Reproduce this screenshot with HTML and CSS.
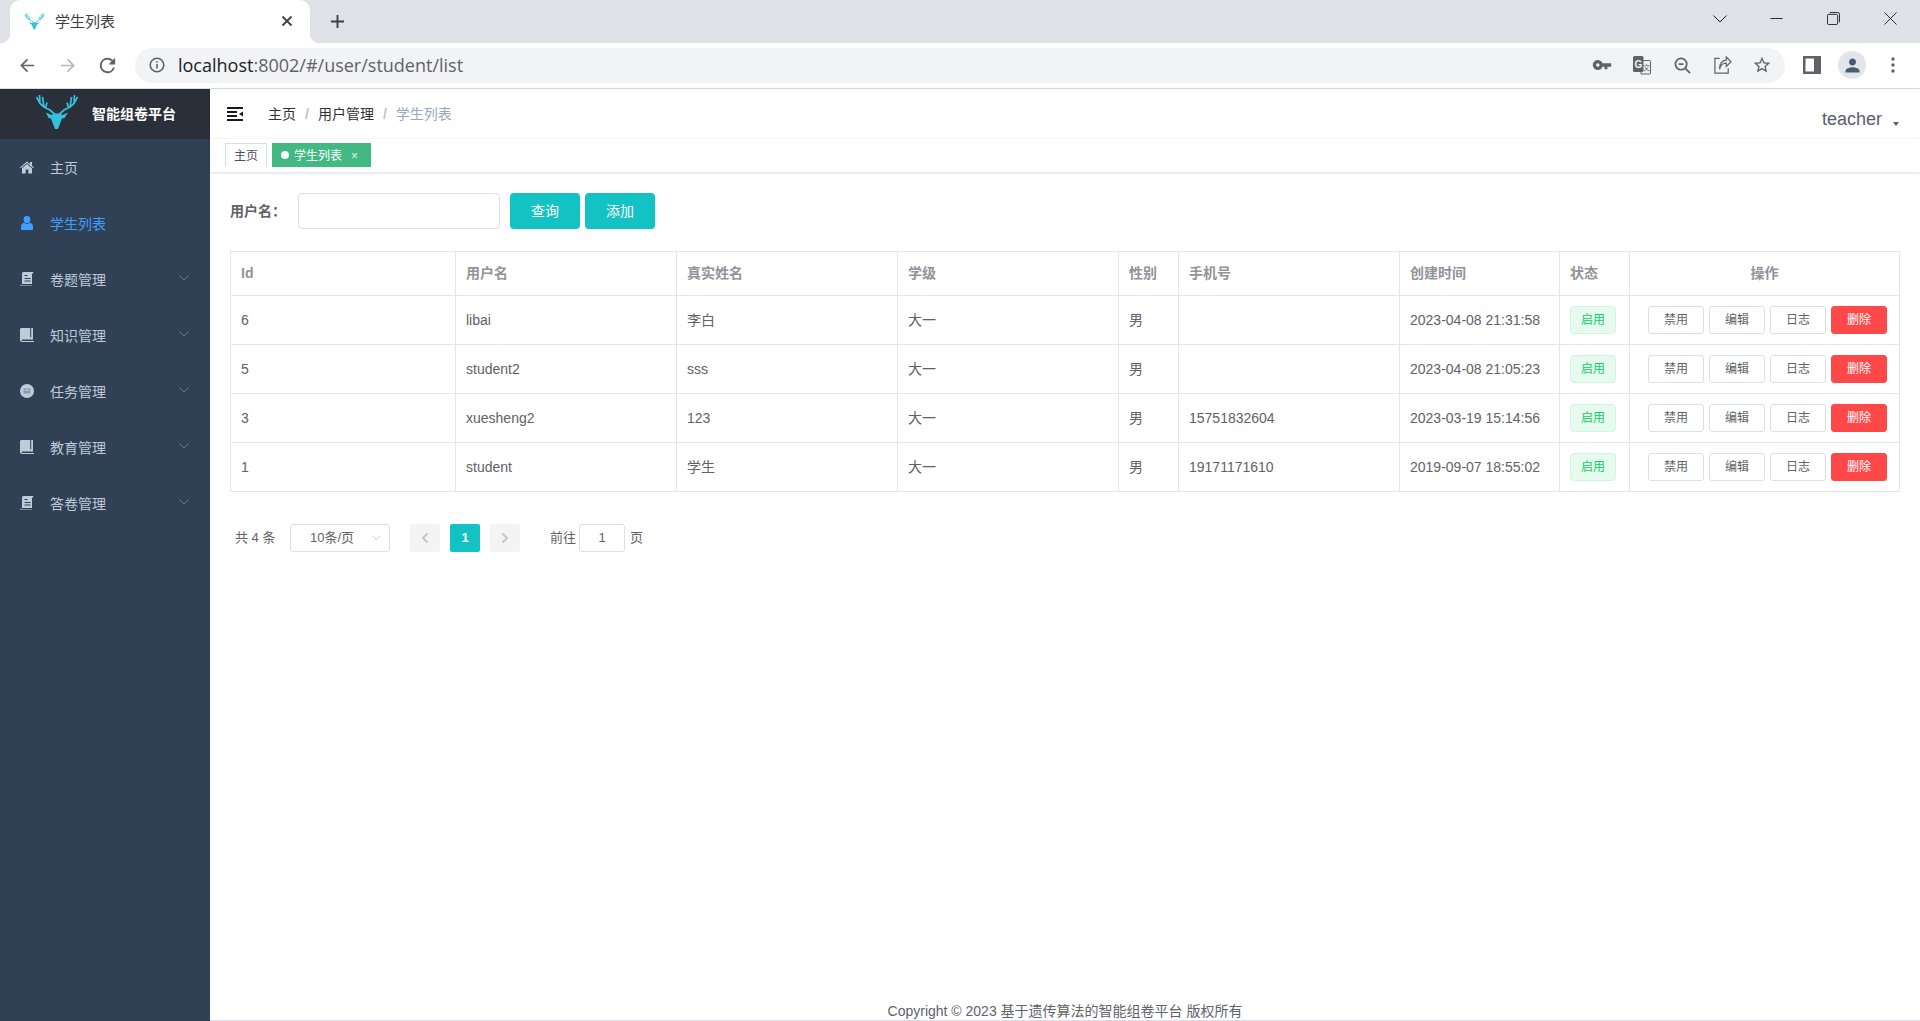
FILE: index.html
```html
<!DOCTYPE html>
<html lang="zh-CN">
<head>
<meta charset="utf-8">
<title>学生列表</title>
<link rel="stylesheet" href="styles.css">
</head>
<body>
<svg class="sprite" aria-hidden="true">
  <symbol id="deer" viewBox="0 0 44 36">
    <path class="deer-head" d="M11 19.500l5.500 2.500L19 20.500h6l2.500 1.500 5.500-2.500-3.500 5.500-2.500.5-4 10.500h-3l-4-10.500-2.500-.5z"/>
    <path class="deer-antler" d="M20 21.500L15 17l-6-3-4-3.500L1.500 4M5 10.500L4.500 2M9 14L7.500 4M10.500 15L12 9.500M24 21.500L29 17l6-3 4-3.500L42.500 4M39 10.500L39.500 2M35 14L36.500 4M33.500 15L32 9.500"/>
  </symbol>
  <symbol id="i-scroll" viewBox="0 0 14 14">
    <path d="M3 0h10.500l-.8 1.800H12V12H2.500L0 14h10.500L12 12.500V13.500H1.200L0 12.700h2V1z" fill="currentColor"/>
    <path d="M4.500 3.500h3M4.500 6.500h6M4.500 9h6" stroke="#304156" stroke-width="1" fill="none"/>
  </symbol>
  <symbol id="i-book" viewBox="0 0 14 14">
    <path d="M1 0h9.200v9l1 .6V0H13v11.500H2a1 1 0 0 0 0 1.500h12v1H1.500L0 12.800V1z" fill="currentColor"/>
  </symbol>
  <symbol id="i-chev" viewBox="0 0 10 6">
    <path d="M.5.500L5 5 9.500.500" fill="none" stroke="currentColor" stroke-width="1"/>
  </symbol>
</svg>

<header class="chrome">
  <div class="tabstrip">
    <div class="tab">
      <svg class="tab-favicon"><use href="#deer"/></svg>
      <span class="tab-title">学生列表</span>
      <svg class="tab-close" viewBox="0 0 12 12"><path d="M1.500 1.500l9 9M10.500 1.500l-9 9"/></svg>
    </div>
    <svg class="newtab" viewBox="0 0 16 16"><path d="M8 1v14M1 8h14"/></svg>
    <div class="winctl">
      <div class="winbtn"><svg viewBox="0 0 14 8" class="win-ic-s"><path d="M.5.500L7 7 13.500.500"/></svg></div>
      <div class="winbtn"><svg viewBox="0 0 14 14" class="win-ic"><path d="M.500 7h13"/></svg></div>
      <div class="winbtn"><svg viewBox="0 0 14 14" class="win-ic"><rect x=".5" y="2.500" width="11" height="11" rx="1.500"/><path d="M3 .5h8.500a2 2 0 0 1 2 2V11"/></svg></div>
      <div class="winbtn"><svg viewBox="0 0 14 14" class="win-ic"><path d="M.5.500l13 13M13.500.500l-13 13"/></svg></div>
    </div>
  </div>
  <div class="toolbar">
    <div class="navbtn"><svg viewBox="0 0 18 18" class="stroke-ic"><path d="M16 9H2.500M9 2.500L2.500 9 9 15.500"/></svg></div>
    <div class="navbtn dim"><svg viewBox="0 0 18 18" class="stroke-ic"><path d="M2 9h13.500M9 2.500L15.500 9 9 15.500"/></svg></div>
    <div class="navbtn"><svg viewBox="0 0 24 24" class="fill-ic big"><path d="M17.650 6.350A7.950 7.950 0 0 0 12 4a8 8 0 1 0 7.730 10h-2.080A6 6 0 1 1 12 6c1.660 0 3.140.690 4.220 1.780L13 11h7V4l-2.350 2.350z"/></svg></div>
    <div class="omnibox">
      <svg viewBox="0 0 16 16" class="info-ic"><circle cx="8" cy="8" r="6.800"/><path d="M8 7v4.500M8 4.200v1.600"/></svg>
      <span class="url"><span class="url-host">localhost</span>:8002/#/user/student/list</span>
      <div class="omni-actions">
        <div class="navbtn"><svg viewBox="0 0 24 24" class="fill-ic"><path d="M12.650 10C11.830 7.670 9.610 6 7 6c-3.310 0-6 2.690-6 6s2.690 6 6 6c2.610 0 4.830-1.670 5.650-4H15v3h3.500v-3H23v-4H12.650zM7 14c-1.100 0-2-.9-2-2s.9-2 2-2 2 .9 2 2-.9 2-2 2z"/></svg></div>
        <div class="navbtn"><svg viewBox="0 0 20 20" class="translate-ic"><path class="tr-back" d="M9 5.500h8.500a1 1 0 0 1 1 1V18a1 1 0 0 1-1 1H9z"/><rect class="tr-front" x="1" y="1" width="10.500" height="16" rx="1.500"/><text x="2.600" y="12.500" class="tr-g">G</text><text x="11" y="14.500" class="tr-z">文</text></svg></div>
        <div class="navbtn"><svg viewBox="0 0 18 18" class="stroke-ic"><circle cx="7.500" cy="7.500" r="6"/><path d="M12 12l5 5M5 7.500h5"/></svg></div>
        <div class="navbtn"><svg viewBox="0 0 20 20" class="stroke-ic thin"><path d="M7 2.500H2V18h14v-5M7 14c.5-4 3.500-6.500 7-6.500V11l5-5-5-5v3.300C9.500 4.500 6.500 8.500 7 14z"/></svg></div>
        <div class="navbtn"><svg viewBox="0 0 24 24" class="fill-ic"><path d="M22 9.240l-7.190-.62L12 2 9.190 8.630 2 9.240l5.460 4.730L5.820 21 12 17.270 18.180 21l-1.630-7.030L22 9.240zM12 15.400l-3.760 2.270 1-4.280-3.320-2.880 4.380-.38L12 6.100l1.710 4.040 4.380.38-3.320 2.880 1 4.280L12 15.400z"/></svg></div>
      </div>
    </div>
    <div class="navbtn panel-btn"><svg viewBox="0 0 18 18" class="panel-ic"><path d="M0 0h18v18H0zM2.500 2.500v13H11v-13z" fill-rule="evenodd"/></svg></div>
    <div class="avatar"><svg viewBox="0 0 24 24"><path d="M12 12c2.210 0 4-1.790 4-4s-1.790-4-4-4-4 1.790-4 4 1.790 4 4 4zm0 2c-2.670 0-8 1.340-8 4v2h16v-2c0-2.660-5.330-4-8-4z"/></svg></div>
    <div class="navbtn"><svg viewBox="0 0 4 16" class="dots-ic"><circle cx="2" cy="2" r="1.700"/><circle cx="2" cy="8" r="1.700"/><circle cx="2" cy="14" r="1.700"/></svg></div>
  </div>
</header>

<div class="app">
  <aside class="sidebar">
    <div class="logo">
      <svg class="logo-deer"><use href="#deer"/></svg>
      <span class="logo-text">智能组卷平台</span>
    </div>
    <nav class="menu">
      <a class="menu-item">
        <svg class="menu-ic" viewBox="0 0 14 14"><path d="M7 1.500L0 7.500l.7.800L7 3l6.300 5.300.7-.8-2-1.700V2h-2v2.100zM7 4L2 8.200V13.500h3.700V9.500h2.600v4H12V8.200z" fill="currentColor"/></svg>
        <span>主页</span>
      </a>
      <a class="menu-item active">
        <svg class="menu-ic" viewBox="0 0 14 14"><path d="M7 0a3.300 3.300 0 0 1 3.300 3.500A3.300 3.300 0 0 1 7 7a3.300 3.300 0 0 1-3.300-3.500A3.300 3.300 0 0 1 7 0zM4 6.800C5.800 8 8.200 8 10 6.800c2 .5 3 2 3 4V14H1v-3.200c0-2 1-3.500 3-4z" fill="currentColor"/></svg>
        <span>学生列表</span>
      </a>
      <a class="menu-item"><svg class="menu-ic"><use href="#i-scroll"/></svg><span>卷题管理</span><svg class="menu-arrow"><use href="#i-chev"/></svg></a>
      <a class="menu-item"><svg class="menu-ic"><use href="#i-book"/></svg><span>知识管理</span><svg class="menu-arrow"><use href="#i-chev"/></svg></a>
      <a class="menu-item">
        <svg class="menu-ic" viewBox="0 0 14 14"><circle cx="7" cy="7" r="7" fill="currentColor"/><path d="M3.500 4.500h7v5h-7z" fill="#8d99aa"/><path d="M5 6h1v1H5zM8 6h1v1H8zM6.500 5.500h1V7h-1z" fill="#d3dae3"/></svg>
        <span>任务管理</span><svg class="menu-arrow"><use href="#i-chev"/></svg>
      </a>
      <a class="menu-item"><svg class="menu-ic"><use href="#i-book"/></svg><span>教育管理</span><svg class="menu-arrow"><use href="#i-chev"/></svg></a>
      <a class="menu-item"><svg class="menu-ic"><use href="#i-scroll"/></svg><span>答卷管理</span><svg class="menu-arrow"><use href="#i-chev"/></svg></a>
    </nav>
  </aside>

  <div class="main">
    <div class="navbar">
      <svg class="hamburger" viewBox="0 0 16 14"><path d="M0 0h16v2H0zM0 4h10v2H0zM0 8h10v2H0zM0 12h16v2H0zM16 4.500v5L12 7z"/></svg>
      <ol class="breadcrumb">
        <li>主页</li><li class="sep">/</li><li>用户管理</li><li class="sep">/</li><li class="current">学生列表</li>
      </ol>
      <div class="user">teacher<i class="caret"></i></div>
    </div>
    <div class="tags">
      <span class="tag-link">主页</span>
      <span class="tag-link on"><i class="tag-dot"></i>学生列表<i class="tag-x">×</i></span>
    </div>

    <section class="content">
      <form class="filter">
        <label class="filter-label">用户名：</label>
        <span class="input"></span>
        <button type="button" class="btn primary">查询</button>
        <button type="button" class="btn primary second">添加</button>
      </form>

      <table class="grid">
        <colgroup>
          <col class="c-id"><col class="c-w"><col class="c-w"><col class="c-w"><col class="c-sex"><col class="c-w"><col class="c-time"><col class="c-state"><col class="c-op">
        </colgroup>
        <thead>
          <tr><th>Id</th><th>用户名</th><th>真实姓名</th><th>学级</th><th>性别</th><th>手机号</th><th>创建时间</th><th>状态</th><th class="center">操作</th></tr>
        </thead>
        <tbody>
          <tr><td>6</td><td>libai</td><td>李白</td><td>大一</td><td>男</td><td></td><td>2023-04-08 21:31:58</td><td><span class="state">启用</span></td><td><div class="ops"><span class="op">禁用</span><span class="op">编辑</span><span class="op">日志</span><span class="op danger">删除</span></div></td></tr>
          <tr><td>5</td><td>student2</td><td>sss</td><td>大一</td><td>男</td><td></td><td>2023-04-08 21:05:23</td><td><span class="state">启用</span></td><td><div class="ops"><span class="op">禁用</span><span class="op">编辑</span><span class="op">日志</span><span class="op danger">删除</span></div></td></tr>
          <tr><td>3</td><td>xuesheng2</td><td>123</td><td>大一</td><td>男</td><td>15751832604</td><td>2023-03-19 15:14:56</td><td><span class="state">启用</span></td><td><div class="ops"><span class="op">禁用</span><span class="op">编辑</span><span class="op">日志</span><span class="op danger">删除</span></div></td></tr>
          <tr><td>1</td><td>student</td><td>学生</td><td>大一</td><td>男</td><td>19171171610</td><td>2019-09-07 18:55:02</td><td><span class="state">启用</span></td><td><div class="ops"><span class="op">禁用</span><span class="op">编辑</span><span class="op">日志</span><span class="op danger">删除</span></div></td></tr>
        </tbody>
      </table>

      <div class="pager">
        <span class="total">共 4 条</span>
        <span class="size">10条/页<svg class="size-arrow"><use href="#i-chev"/></svg></span>
        <span class="page-btn arrow"><svg viewBox="0 0 8 12"><path d="M6.500 1.500L2 6l4.500 4.500"/></svg></span>
        <span class="page-btn current">1</span>
        <span class="page-btn arrow"><svg viewBox="0 0 8 12"><path d="M1.500 1.500L6 6l-4.500 4.500"/></svg></span>
        <span class="jump">前往</span>
        <span class="jump-input">1</span>
        <span class="jump-end">页</span>
      </div>
    </section>

    <footer class="footer">Copyright © 2023 基于遗传算法的智能组卷平台 版权所有</footer>
  </div>
</div>
</body>
</html>
```

FILE: styles.css
```css
* { box-sizing: border-box; }
html, body { margin: 0; height: 100%; }
body {
  display: flex;
  flex-direction: column;
  height: 1021px;
  overflow: hidden;
  background: #fff;
  color: #606266;
  font-family: "Liberation Sans", "Noto Sans CJK SC", sans-serif;
  font-size: 14px;
  line-height: 20px;
}
.sprite { display: none; }

/* browser chrome */
.chrome { flex: none; }
.tabstrip { display: flex; height: 43px; background: #dee1e6; padding-left: 10px; align-items: stretch; }
.tab {
  position: relative;
  display: flex;
  align-items: center;
  width: 300px;
  background: #fff;
  border-radius: 10px 10px 0 0;
  padding: 0 16px 0 14px;
}
.tab::before, .tab::after {
  content: "";
  position: absolute;
  bottom: 0;
  width: 10px;
  height: 10px;
}
.tab::before { left: -10px; background: radial-gradient(circle at 0 0, transparent 10px, #fff 10.5px); }
.tab::after { right: -10px; background: radial-gradient(circle at 100% 0, transparent 10px, #fff 10.5px); }
.tab-favicon { width: 21px; height: 18px; margin-top: -2px; }
.tab-title { margin-left: 10px; font-size: 15px; color: #3c4043; flex: 1; margin-top: 1px; }
.tab-close { width: 12px; height: 12px; fill: none; stroke: #3c4043; stroke-width: 1.800; margin: -1px 1px 0 0; }
.newtab { width: 15px; height: 15px; margin: 14px 0 0 20px; fill: none; stroke: #3c4043; stroke-width: 2; }
.winctl { display: flex; margin-left: auto; margin-right: 1px; }
.winbtn { width: 57px; display: flex; align-items: flex-start; justify-content: center; padding-top: 12px; }
.win-ic { width: 13px; height: 13px; fill: none; stroke: #1f1f1f; stroke-width: 1; }
.win-ic-s { width: 14px; height: 8px; margin-top: 3px; fill: none; stroke: #1f1f1f; stroke-width: 1; }

.toolbar {
  display: flex;
  align-items: center;
  height: 46px;
  padding: 0 7px 1px;
  background: #fff;
  border-bottom: 1px solid #dadce0;
}
.navbtn { flex: none; width: 40px; height: 35px; display: flex; align-items: center; justify-content: center; }
.navbtn.dim { opacity: .45; }
.stroke-ic { width: 17px; height: 17px; fill: none; stroke: #5f6368; stroke-width: 1.800; }
.stroke-ic.thin { width: 19px; height: 19px; stroke-width: 1.300; }
.fill-ic { width: 20px; height: 20px; fill: #5f6368; }
.fill-ic.big { width: 23px; height: 23px; }
.omnibox {
  display: flex;
  align-items: center;
  flex: none;
  width: 1650px;
  height: 35px;
  margin-left: 8px;
  padding: 0 3px 0 14px;
  background: #f1f3f4;
  border-radius: 18px;
}
.info-ic { width: 16px; height: 16px; fill: none; stroke: #5f6368; stroke-width: 1.600; }
.url { margin-left: 13px; font-family: "Open Sans", sans-serif; font-size: 18px; color: #5f6368; }
.url-host { color: #202124; }
.omni-actions { display: flex; margin-left: auto; }
.translate-ic { width: 20px; height: 20px; }
.tr-back { fill: #f1f3f4; stroke: #5f6368; stroke-width: 1; }
.tr-front { fill: #5f6368; }
.tr-g { font-size: 10px; font-weight: 700; fill: #f1f3f4; font-family: "Liberation Sans", sans-serif; }
.tr-z { font-size: 7px; fill: #5f6368; font-family: "Noto Sans CJK SC", sans-serif; }
.panel-btn { margin-left: 7px; }
.panel-ic { width: 18px; height: 18px; fill: #5f6368; }
.avatar { flex: none; width: 28px; height: 28px; margin: 0 7px 0 6px; border-radius: 50%; background: #e2e5ea; display: flex; align-items: center; justify-content: center; }
.avatar svg { width: 21px; height: 21px; fill: #4a5a75; }
.dots-ic { width: 4px; height: 16px; fill: #5f6368; }

/* app shell */
.app { flex: 1; display: flex; min-height: 0; }
.sidebar { flex: none; width: 210px; background: #304156; }
.logo { display: flex; align-items: center; height: 50px; background: #2b2f3a; padding-left: 35px; }
.logo-deer { width: 44px; height: 36px; margin-top: -6px; flex: none; }
.logo-text { margin-left: 13px; font-size: 14px; font-weight: 700; color: #fff; white-space: nowrap; }
.deer-head { fill: #35c1de; }
.deer-antler { fill: none; stroke: #35c1de; stroke-width: 1.700; }
.menu { padding-top: 1px; }
.menu-item { position: relative; display: flex; align-items: center; height: 56px; padding-left: 20px; color: #bfcbd9; font-size: 14px; }
.menu-item.active { color: #409eff; }
.menu-ic { width: 14px; height: 14px; margin-right: 16px; flex: none; margin-top: -2px; }
.menu-arrow { width: 10px; height: 6px; margin-left: auto; margin-right: 21px; margin-top: -5px; color: #6c7a8d; }

.main { flex: 1; min-width: 0; display: flex; flex-direction: column; }
.navbar { flex: none; display: flex; align-items: center; height: 50px; padding-left: 17px; background: #fff; box-shadow: 0 1px 4px rgba(0, 21, 41, .08); position: relative; }
.hamburger { width: 16px; height: 14px; fill: #1a1a1a; margin-top: -1px; }
.breadcrumb { display: flex; list-style: none; margin: 0 0 0 25px; padding: 0; color: #303133; font-size: 14px; }
.breadcrumb .sep { margin: 0 9px; color: #c0c4cc; font-weight: 700; }
.breadcrumb .current { color: #97a8be; }
.user { margin-left: auto; margin-right: 21px; font-size: 18px; color: #5a5e66; display: flex; align-items: center; margin-top: 10px; }
.caret { width: 0; height: 0; margin: 9px 0 0 11px; border: 3.500px solid transparent; border-top: 4px solid #5a5e66; border-bottom: 0; }

.tags { flex: none; display: flex; align-items: flex-start; height: 33px; padding: 4px 0 0 15px; background: #fff; box-shadow: 0 1px 3px 0 rgba(0, 0, 0, .12), 0 0 3px 0 rgba(0, 0, 0, .04); position: relative; }
.tag-link { display: flex; align-items: center; height: 24px; padding: 2px 8px 0; margin-right: 5px; font-size: 12px; color: #495060; border: 1px solid #d8dce5; border-bottom-color: #fff; background: #fff; }
.tag-link.on { background: #42b983; color: #fff; border-color: #42b983; padding: 2px 12px 0 8px; }
.tag-dot { width: 8px; height: 8px; border-radius: 50%; background: #fff; margin: -2px 5px 0 0; }
.tag-x { font-style: normal; margin-left: 9px; font-size: 12px; opacity: .85; }

.content { padding: 21px 20px 0; }
.filter { display: flex; align-items: center; height: 36px; }
.filter-label { width: 68px; font-size: 14px; font-weight: 700; color: #606266; white-space: nowrap; }
.input { width: 202px; height: 36px; border: 1px solid #dcdfe6; border-radius: 4px; background: #fff; }
.btn { width: 70px; height: 36px; border: 0; border-radius: 4px; margin-left: 10px; font: inherit; font-size: 14px; color: #fff; }
.btn.primary { background: #13c2c2; }
.btn.second { margin-left: 5px; }

.grid { width: 1669px; margin-top: 22px; table-layout: fixed; border-collapse: collapse; border: 1px solid #e3e6ee; color: #606266; }
.c-id { width: 225px; }
.c-w { width: 221px; }
.c-sex { width: 60px; }
.c-time { width: 160px; }
.c-state { width: 70px; }
.c-op { width: 270px; }
.grid th, .grid td { padding: 0 0 0 10px; border: 1px solid #e3e6ee; text-align: left; white-space: nowrap; overflow: hidden; }
.grid th { height: 44px; padding-bottom: 2px; color: #909399; font-weight: 700; }
.grid th.center { text-align: center; padding: 0 0 2px; }
.grid td { height: 49px; }
.state { display: inline-flex; align-items: center; justify-content: center; width: 46px; height: 28px; vertical-align: middle; font-size: 12px; color: #13ce66; background: #e7faf0; border: 1px solid #d0f5e0; border-radius: 4px; }
.ops { display: flex; gap: 5px; padding-left: 8px; }
.op { display: flex; align-items: center; justify-content: center; width: 56px; height: 28px; font-size: 12px; color: #606266; background: #fff; border: 1px solid #dcdfe6; border-radius: 3px; }
.op.danger { color: #fff; background: #ff4949; border-color: #ff4949; }

.pager { display: flex; align-items: center; height: 28px; margin-top: 32px; padding-left: 5px; font-size: 13px; color: #606266; }
.total { width: 55px; flex: none; }
.size { display: flex; align-items: center; width: 100px; height: 28px; padding-left: 19px; flex: none; border: 1px solid #dcdfe6; border-radius: 3px; margin-right: 20px; }
.size-arrow { width: 9px; height: 6px; margin-left: auto; margin-right: 8px; color: #c0c4cc; }
.page-btn { display: flex; align-items: center; justify-content: center; flex: none; width: 30px; height: 28px; margin-right: 10px; background: #f4f4f5; border-radius: 2px; font-weight: 700; }
.page-btn.current { background: #13c2c2; color: #fff; }
.page-btn svg { width: 8px; height: 12px; fill: none; stroke: #c0c4cc; stroke-width: 1.800; }
.jump { margin-left: 20px; width: 29px; flex: none; }
.jump-input { display: flex; align-items: center; justify-content: center; width: 46px; height: 28px; flex: none; border: 1px solid #dcdfe6; border-radius: 3px; }
.jump-end { margin-left: 5px; }

.footer { margin-top: auto; height: 20px; line-height: 20px; text-align: center; font-size: 14px; color: #606266; border-bottom: 1px solid #dcdfe6; }
```
